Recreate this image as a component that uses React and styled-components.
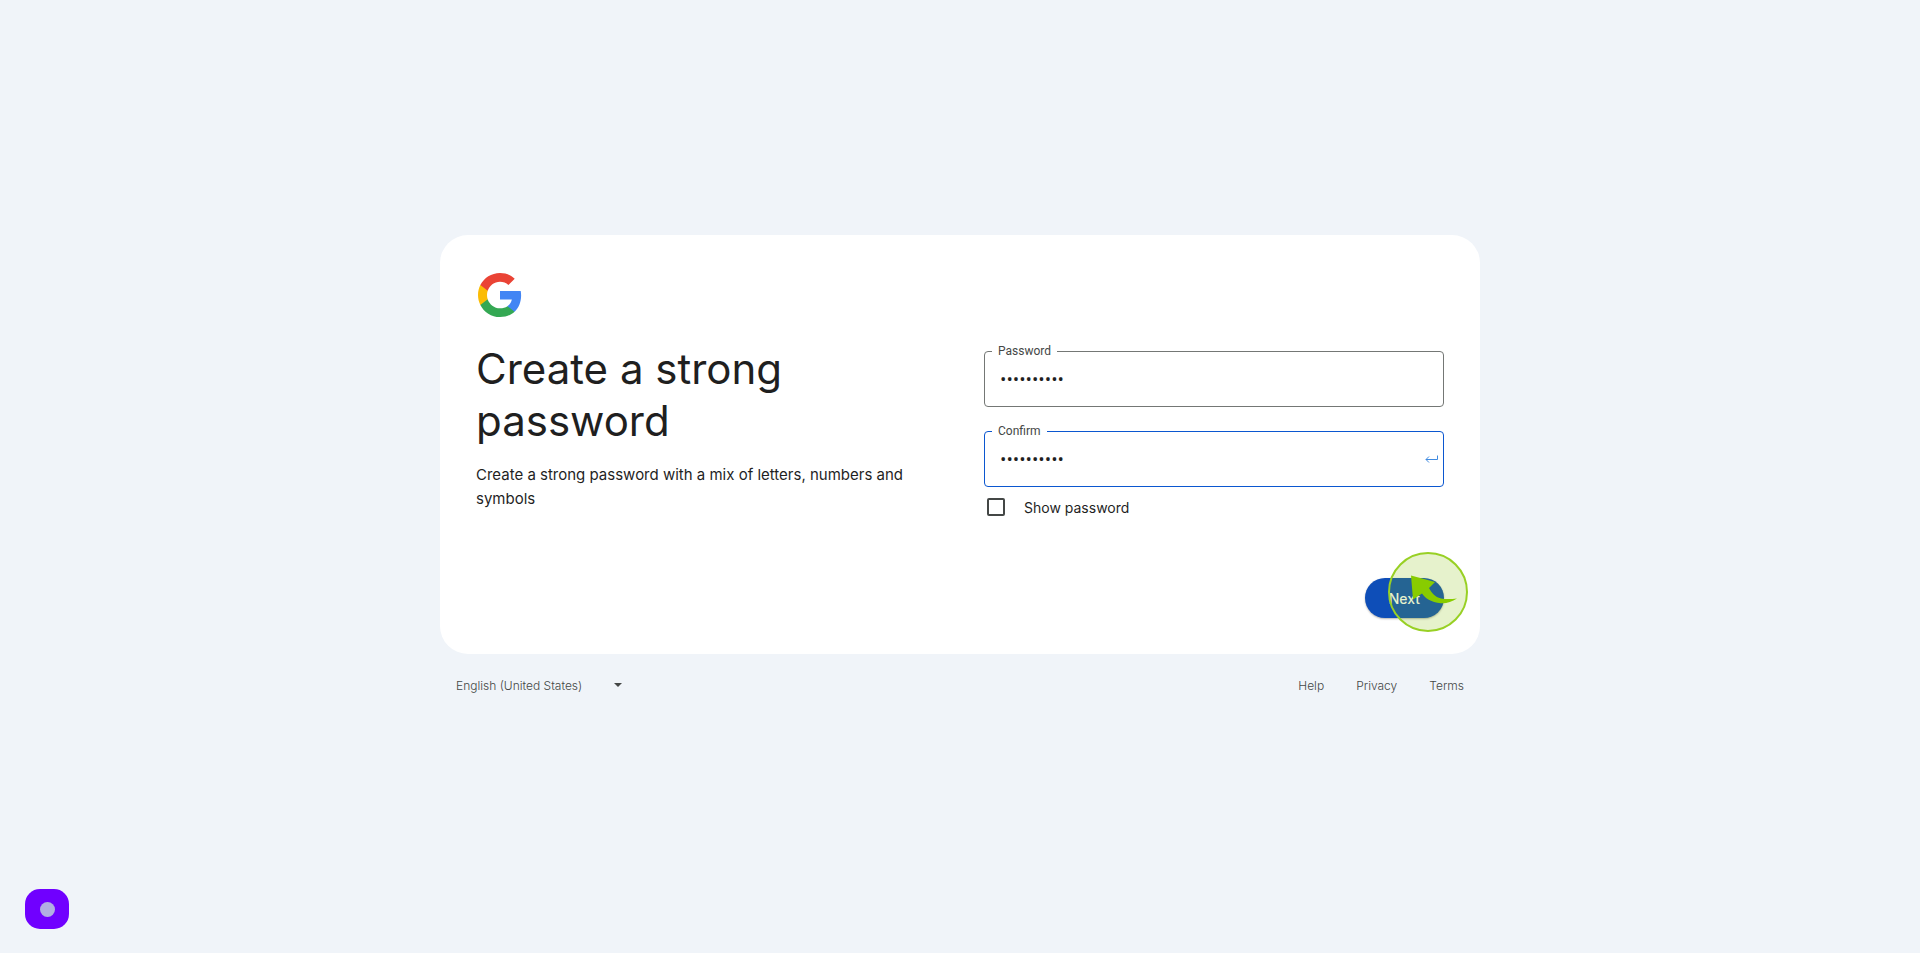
import React, { useState } from "react";
import styled, { createGlobalStyle } from "styled-components";

const GlobalStyle = createGlobalStyle`
  * {
    box-sizing: border-box;
  }
  body {
    margin: 0;
    background: #f0f4f9;
    color: #1f1f1f;
    font-family: Inter, "Liberation Sans", sans-serif;
  }
`;

const GoogleLogo = () => (
  <Logo viewBox="0 0 48 48" role="img" aria-label="Google">
    <path
      fill="#4285F4"
      d="M45.12 24.5c0-1.56-.14-3.06-.4-4.5H24v8.51h11.84c-.51 2.75-2.06 5.08-4.39 6.64v5.52h7.11c4.16-3.83 6.56-9.47 6.56-16.17z"
    />
    <path
      fill="#34A853"
      d="M24 46c5.94 0 10.92-1.97 14.56-5.33l-7.11-5.52c-1.97 1.32-4.49 2.1-7.45 2.1-5.73 0-10.58-3.87-12.31-9.07H4.34v5.7C7.96 41.07 15.4 46 24 46z"
    />
    <path
      fill="#FBBC05"
      d="M11.69 28.18C11.25 26.86 11 25.45 11 24s.25-2.86.69-4.18v-5.7H4.34C2.85 17.09 2 20.45 2 24c0 3.55.85 6.91 2.34 9.88l7.35-5.7z"
    />
    <path
      fill="#EA4335"
      d="M24 10.75c3.23 0 6.13 1.11 8.41 3.29l6.31-6.31C34.91 4.18 29.93 2 24 2 15.4 2 7.96 6.93 4.34 14.12l7.35 5.7c1.73-5.2 6.58-9.07 12.31-9.07z"
    />
  </Logo>
);

const PasswordField = ({ id, label, value, onChange, active, children }) => (
  <Outline $active={active}>
    <legend>
      <label htmlFor={id}>{label}</label>
    </legend>
    <input id={id} type="password" value={value} onChange={onChange} />
    {children}
  </Outline>
);

const App = () => {
  const [password, setPassword] = useState("password12");
  const [confirm, setConfirm] = useState("password12");

  return (
    <Page>
      <GlobalStyle />
      <Container>
        <Card>
          <GoogleLogo />
          <Columns>
            <Intro>
              <h1>Create a strong password</h1>
              <p>
                Create a strong password with a mix of letters, numbers and
                symbols
              </p>
            </Intro>
            <Form>
              <PasswordField
                id="password"
                label="Password"
                value={password}
                onChange={(e) => setPassword(e.target.value)}
              />
              <PasswordField
                id="confirm"
                label="Confirm"
                value={confirm}
                onChange={(e) => setConfirm(e.target.value)}
                active
              >
                <EnterIcon viewBox="0 0 13 9" aria-hidden="true">
                  <path d="M12.5 0.5v4H1M4 1.5l-3 3 3 3" />
                </EnterIcon>
              </PasswordField>
              <ShowPassword>
                <input type="checkbox" id="show" />
                <label htmlFor="show">Show password</label>
              </ShowPassword>
            </Form>
          </Columns>
          <Actions>
            <NextWrap>
              <NextButton type="button">Next</NextButton>
              <Pointer viewBox="0 0 80 80" aria-hidden="true">
                <circle cx="40" cy="40" r="39" />
                <path d="M23 23.500L47 30L41 36C43.500 41 47 45 53 46.500C58 47.500 64 47 69 46.500C63 50.500 57 52 51 51C43 50 37.500 46.500 34 41.500L25 47.500Z" />
              </Pointer>
            </NextWrap>
          </Actions>
        </Card>
        <Footer>
          <Language>
            <select aria-label="Language" defaultValue="en-US">
              <option value="en-US">English (United States)</option>
            </select>
            <svg viewBox="0 0 8 4" aria-hidden="true">
              <path d="M0 0h8L4 4z" />
            </svg>
          </Language>
          <nav>
            <a href="#help">Help</a>
            <a href="#privacy">Privacy</a>
            <a href="#terms">Terms</a>
          </nav>
        </Footer>
      </Container>
      <Recorder type="button" aria-label="Recorder">
        <span />
      </Recorder>
    </Page>
  );
};

const Page = styled.main`
  min-height: 100vh;
  display: flex;
  flex-direction: column;
  align-items: center;
  justify-content: center;
`;

const Container = styled.div`
  width: 100%;
  max-width: 1040px;
`;

const Card = styled.section`
  background: #fff;
  border-radius: 28px;
  padding: 36px;
`;

const Logo = styled.svg`
  display: block;
  width: 48px;
  height: 48px;
`;

const Columns = styled.div`
  display: grid;
  grid-template-columns: 1fr 1fr;
  gap: 48px;
`;

const Intro = styled.div`
  padding-top: 24px;
  h1 {
    margin: 0;
    font-size: 42px;
    font-weight: 400;
    line-height: 52px;
  }
  p {
    margin: 16px 0 0;
    font-size: 15px;
    line-height: 24px;
  }
`;

const Form = styled.form`
  padding-top: 24px;
`;

const Outline = styled.fieldset`
  display: flex;
  align-items: center;
  min-width: 0;
  height: 64px;
  margin: 0 0 16px;
  padding: 0 5px 8px 15px;
  border: 1px solid ${(props) => (props.$active ? "#0b57d0" : "#747775")};
  border-radius: 4px;

  legend {
    margin-left: -8px;
    padding: 0 6px;
    color: #444746;
    font-family: Roboto, sans-serif;
    font-size: 12px;
    line-height: 17px;
  }
  input {
    flex: 1;
    min-width: 0;
    height: 24px;
    padding: 0 0 2px;
    border: 0;
    outline: 0;
    background: transparent;
    color: #1f1f1f;
    font-family: "Open Sans", sans-serif;
    font-size: 17px;
  }
`;

const EnterIcon = styled.svg`
  width: 13px;
  height: 9px;
  fill: none;
  stroke: #3f8ae0;
`;

const ShowPassword = styled.div`
  display: flex;
  align-items: center;
  gap: 19px;
  margin-top: -8px;
  padding-left: 3px;
  height: 24px;
  font-size: 14px;
  input {
    appearance: none;
    width: 18px;
    height: 18px;
    margin: 0;
    border: 2px solid #444746;
    border-radius: 2px;
  }
`;

const Actions = styled.div`
  display: flex;
  justify-content: flex-end;
  margin-top: 59px;
`;

const NextWrap = styled.div`
  position: relative;
`;

const NextButton = styled.button`
  display: block;
  height: 40px;
  padding: 0 24px;
  border: 0;
  border-radius: 20px;
  background: #0e4eb8;
  box-shadow: 0 1px 2px rgba(0, 0, 0, 0.3);
  color: #fff;
  font-family: inherit;
  font-size: 14px;
  font-weight: 500;
`;

const Pointer = styled.svg`
  position: absolute;
  top: -26px;
  right: -24px;
  width: 80px;
  height: 80px;
  pointer-events: none;
  circle {
    fill: rgba(130, 190, 0, 0.2);
    stroke: #98d024;
    stroke-width: 2;
  }
  path {
    fill: #88cc00;
  }
`;

const Footer = styled.footer`
  display: flex;
  justify-content: space-between;
  align-items: center;
  height: 64px;
  padding: 0 16px 2px;
  color: #444746;
  font-size: 12px;
  font-weight: 300;
  nav {
    display: flex;
    gap: 32px;
  }
  a {
    color: inherit;
    text-decoration: none;
  }
`;

const Language = styled.div`
  display: flex;
  align-items: center;
  width: 166px;
  select {
    flex: 1;
    appearance: none;
    padding: 0;
    border: 0;
    background: transparent;
    color: inherit;
    font: inherit;
  }
  svg {
    width: 8px;
    height: 4px;
    fill: #444746;
  }
`;

const Recorder = styled.button`
  position: fixed;
  left: 25px;
  bottom: 24px;
  display: grid;
  place-items: center;
  width: 44px;
  height: 40px;
  padding: 0;
  border: 0;
  border-radius: 15px;
  background: #7000ff;
  span {
    width: 15px;
    height: 15px;
    border-radius: 50%;
    background: #b2aee2;
  }
`;

export default App;
